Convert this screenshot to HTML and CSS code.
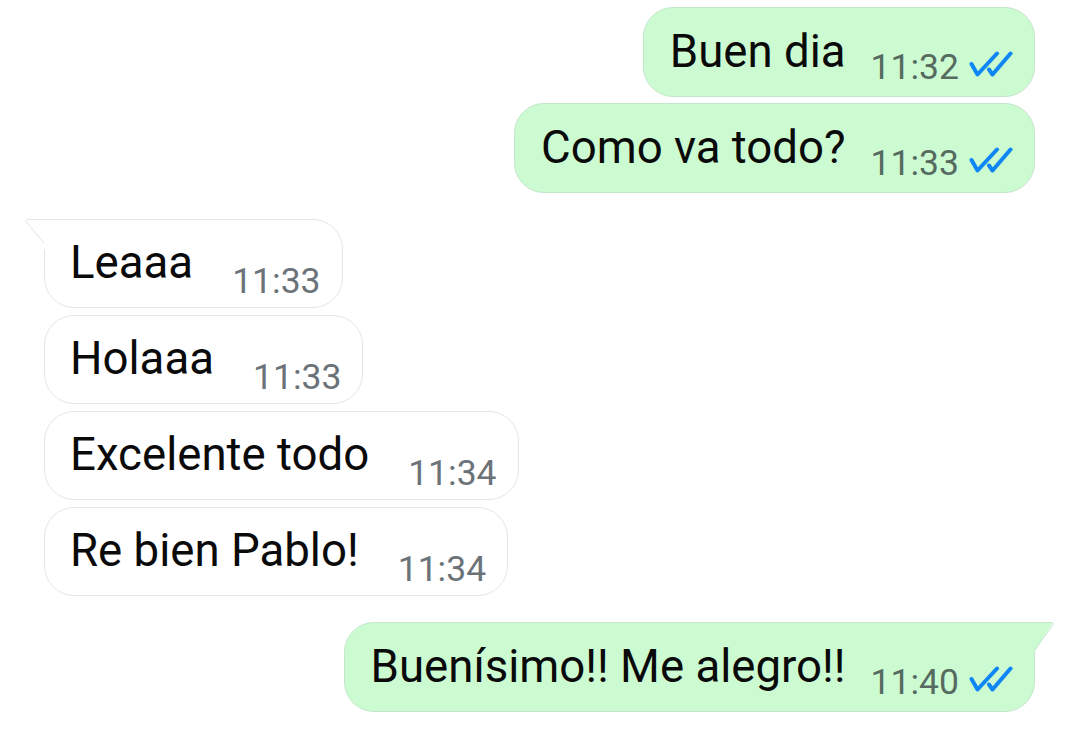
FILE: index.html
```html
<!DOCTYPE html>
<html lang="es">
<head>
  <meta charset="UTF-8" />
  <title>Chat</title>
  <link rel="stylesheet" href="styles.css">
</head>
<body>
  <main class="chat">
    <section class="group out">
      <div class="bubble out">
        <span class="text">Buen dia</span>
        <span class="meta"><span class="time">11:32</span><svg class="ticks" viewBox="0 0 44 26"><polyline points="2.5,13 8.5,23.5 28,2.5"/><polyline points="20,18.5 23.5,23.5 41.5,2.5"/></svg></span>
      </div>
      <div class="bubble out">
        <span class="text">Como va todo?</span>
        <span class="meta"><span class="time">11:33</span><svg class="ticks" viewBox="0 0 44 26"><polyline points="2.5,13 8.5,23.5 28,2.5"/><polyline points="20,18.5 23.5,23.5 41.5,2.5"/></svg></span>
      </div>
    </section>

    <section class="group in">
      <div class="bubble in first">
        <svg class="tail" viewBox="0 0 24 30"><path class="tail-fill" d="M2.5 1 H24 V30 H20 V25 Z"/><path class="tail-line" d="M24 0.5 H3.5 Q0.8 0.5 2 2.6 L20.5 24.5"/></svg>
        <span class="text">Leaaa</span>
        <span class="meta"><span class="time">11:33</span></span>
      </div>
      <div class="bubble in">
        <span class="text">Holaaa</span>
        <span class="meta"><span class="time">11:33</span></span>
      </div>
      <div class="bubble in">
        <span class="text">Excelente todo</span>
        <span class="meta"><span class="time">11:34</span></span>
      </div>
      <div class="bubble in">
        <span class="text">Re bien Pablo!</span>
        <span class="meta"><span class="time">11:34</span></span>
      </div>
    </section>

    <section class="group out">
      <div class="bubble out first">
        <svg class="tail" viewBox="0 0 24 30"><path class="tail-fill" d="M2.5 1 H24 V30 H20 V29 Z"/><path class="tail-line" d="M24 0.5 H3.5 Q0.8 0.5 2 2.6 L20.5 28.5"/></svg>
        <span class="text">Buenísimo!! Me alegro!!</span>
        <span class="meta"><span class="time">11:40</span><svg class="ticks" viewBox="0 0 44 26"><polyline points="2.5,13 8.5,23.5 28,2.5"/><polyline points="20,18.5 23.5,23.5 41.5,2.5"/></svg></span>
      </div>
    </section>
  </main>
</body>
</html>
```

FILE: styles.css
```css
body { margin: 0; background: #fff; font-family: Roboto, "Noto Sans", sans-serif; color: #0a0a0a; }
.chat { display: flex; flex-direction: column; gap: 26px; padding: 7px 45px 0 44px; }
.group { display: flex; flex-direction: column; }
.group.out { align-items: flex-end; gap: 6px; }
.group.in { align-items: flex-start; gap: 7px; }

.bubble {
  position: relative;
  display: flex;
  align-items: flex-start;
  border-radius: 30px;
  border: 1px solid;
  box-sizing: border-box;
}
.bubble.out {
  background: #ccfbd2;
  border-color: #c4e6cb;
  height: 90px;
  padding: 18px 21px 0 26px;
}
.bubble.in {
  background: #fff;
  border-color: #e3e5e7;
  height: 89px;
  padding: 17px 21px 0 25px;
}
.bubble.in.first { border-top-left-radius: 0; }
.bubble.out.first { border-top-right-radius: 0; }

.text { font-size: 45.6px; line-height: 52px; white-space: nowrap; }

.meta { display: flex; align-items: flex-end; }
.out .meta { margin: 21px 0 0 25px; }
.in .meta { margin: 24px 0 0 39px; }

.time { font-size: 35.5px; line-height: 40px; }
.out .time { color: #566a60; }
.in .time { color: #6b7379; }

.ticks { width: 44px; height: 26px; margin: 0 0 10px 10px; }
.ticks polyline { fill: none; stroke: #0f86f5; stroke-width: 4; stroke-linecap: round; stroke-linejoin: round; }

.tail { position: absolute; top: -1px; width: 24px; height: 30px; }
.in .tail { left: -21px; }
.out .tail { right: -21px; transform: scaleX(-1); }
.tail-line { fill: none; stroke-width: 1; }
.in .tail-fill { fill: #fff; }
.in .tail-line { stroke: #e3e5e7; }
.out .tail-fill { fill: #ccfbd2; }
.out .tail-line { stroke: #c4e6cb; }
```
